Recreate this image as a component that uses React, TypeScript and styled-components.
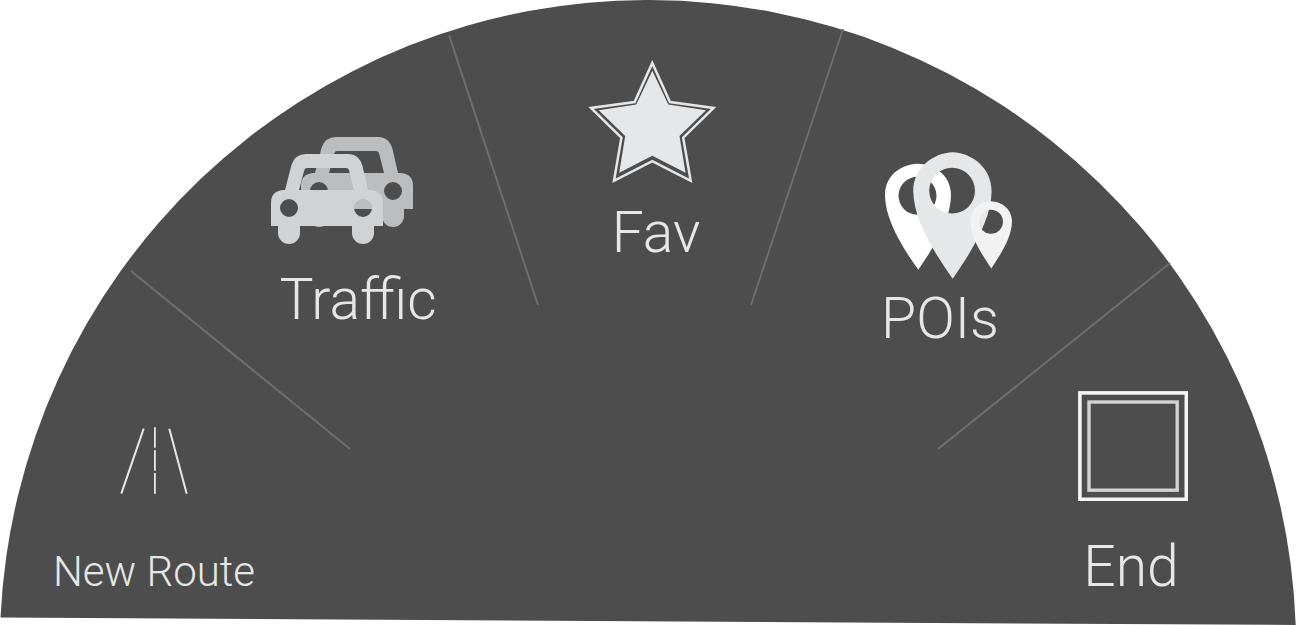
import React from "react";
import styled, { createGlobalStyle } from "styled-components";

const GlobalStyle = createGlobalStyle`
  body {
    margin: 0;
    background: #ffffff;
  }
`;

/* The dial and its items share one grid cell, so the dial's height sets the menu's. */
const RadialMenu = styled.nav`
  display: grid;
  width: 100%;
  font-family: Roboto, "Liberation Sans", sans-serif;
  font-weight: 300;
`;

const Dial = styled.svg`
  grid-area: 1 / 1;
  display: block;
  width: 100%;
  height: auto;
`;

const Items = styled.ul`
  grid-area: 1 / 1;
  display: grid;
  grid-template-columns: 220fr 188fr 408fr 160fr 222fr;
  align-items: start;
  margin: 0;
  padding: 0 54px 0 44px;
  list-style: none;
`;

const Item = styled.li<{ $drop: number }>`
  display: flex;
  justify-content: center;
  padding-top: calc(100vw * ${(p) => p.$drop} / 1296);
`;

const ItemButton = styled.button<{ $gap: number }>`
  display: flex;
  flex-direction: column;
  align-items: center;
  gap: ${(p) => p.$gap}px;
  padding: 0;
  border: 0;
  background: none;
  color: #e6e7e8;
  font: inherit;
  cursor: pointer;
`;

const Label = styled.span<{ $small?: boolean }>`
  font-size: ${(p) => (p.$small ? 42 : 57)}px;
  line-height: 56px;
  white-space: nowrap;
`;

const Icon = styled.svg`
  display: block;
  flex: none;
`;

function RoadIcon() {
  return (
    <Icon width="68" height="68" viewBox="10 12 68 68" fill="none" stroke="#e6e7e8" strokeWidth="2" aria-hidden="true">
      <path d="M33.7 13.7 11.3 78.7M59.3 13.7 76.7 78.7" />
      <path d="M44.9 12.3V32.7M44.9 35.3V55.7M44.9 58V78.7" strokeWidth="1.8" />
    </Icon>
  );
}

const CAR =
  "M25 65 31.5 40Q35 29 46 29H88Q99 29 102.5 41L108 65H111Q123 66 123 78V101H114V108A11 11 0 0 1 92 108V101H40V108A11 11 0 0 1 18 108V101H11V78Q11 66 23 65Z" +
  "M39 65H94L89 45Q88 43 86 43H47Q45 43 44.3 45Z" +
  "M20 83A9 9 0 0 0 38 83A9 9 0 0 0 20 83Z" +
  "M94 83A9 9 0 0 0 112 83A9 9 0 0 0 94 83Z";

function CarsIcon() {
  return (
    <Icon width="174" height="107" viewBox="11 12 174 107" fillRule="evenodd" aria-hidden="true">
      <path d={CAR} fill="#bcbdbf" transform="translate(30 -17)" />
      <path d={CAR} fill="#d1d2d4" />
    </Icon>
  );
}

function StarIcon() {
  return (
    <Icon width="136" height="124" viewBox="8 10 136 124" aria-hidden="true">
      <path
        d="M72.3 12.9 90 52 133.6 57.9 103.2 87.6 110.7 130.8 72.3 111.2 34 130.8 41.4 87.6 11 57.9 54.6 52Z"
        fill="none"
        stroke="#e6e7e8"
        strokeWidth="2.5"
      />
      <path
        d="M72.3 20.7 88.3 54.6 126 60.3 99.5 86 105.5 122.7 72.3 105.7 39.2 122.7 45.2 86 18.7 60.3 56.3 54.6Z"
        fill="#e6e7e8"
      />
    </Icon>
  );
}

function PinsIcon() {
  return (
    <Icon width="144" height="127" viewBox="-7 12 144 127" fillRule="evenodd" aria-hidden="true">
      <path
        d="M42.7 23.7C58 24 76 34 76 55C76 79 59 107 43.3 129.8C27 107 10 79 10 55C10 36 25 24.5 42.7 23.7ZM23.5 55.7A19 19 0 0 0 61.5 55.7A19 19 0 0 0 23.5 55.7Z"
        fill="#ffffff"
      />
      <path
        d="M77.7 12.3C97 13 116.6 28 116.6 51C116.6 79 97 111 77.7 138.7C58 111 38.3 79 38.3 51C38.3 28 58 13 77.7 12.3ZM54.2 50.7A22.9 22.9 0 0 0 100 50.7A22.9 22.9 0 0 0 54.2 50.7Z"
        fill="#e6e7e8"
      />
      <path
        d="M116 61.3C127 61.6 137 69.5 137 81C137 97 126.5 113 116.3 128.4C106 113 95.3 97 95.3 81C95.3 69.5 105 61.6 116 61.3ZM104 81.7A12 12 0 0 0 128 81.7A12 12 0 0 0 104 81.7Z"
        fill="#f2f2f2"
      />
    </Icon>
  );
}

function StopIcon() {
  return (
    <Icon width="114" height="110" viewBox="-4 0 114 110" fill="none" aria-hidden="true">
      <rect x="1.9" y="1.9" width="106.4" height="106.4" stroke="#f5f5f5" strokeWidth="3.6" />
      <rect x="11" y="11" width="88.2" height="88.2" stroke="#d1d3d4" strokeWidth="3.4" />
    </Icon>
  );
}

const ITEMS = [
  { label: "New Route", icon: <RoadIcon />, drop: 427, gap: 49, small: true },
  { label: "Traffic", icon: <CarsIcon />, drop: 137, gap: 28 },
  { label: "Fav", icon: <StarIcon />, drop: 60, gap: 21 },
  { label: "POIs", icon: <PinsIcon />, drop: 152, gap: 12 },
  { label: "End", icon: <StopIcon />, drop: 391, gap: 38 },
];

export default function App() {
  return (
    <>
      <GlobalStyle />
      <RadialMenu aria-label="Navigation">
        <Dial viewBox="0 0 1296 625" aria-hidden="true">
          <path d="M0.500 617.500A648 648 0 0 1 650 0A648 648 0 0 1 1295.700 625Z" fill="#4d4d4d" />
          <path
            d="M131 271 350 449M449 35 538 305M843 29 751 305M1170 263 938 449"
            fill="none"
            stroke="#6d6e70"
            strokeWidth="2"
          />
        </Dial>
        <Items>
          {ITEMS.map((item) => (
            <Item key={item.label} $drop={item.drop}>
              <ItemButton type="button" $gap={item.gap}>
                {item.icon}
                <Label $small={item.small}>{item.label}</Label>
              </ItemButton>
            </Item>
          ))}
        </Items>
      </RadialMenu>
    </>
  );
}
